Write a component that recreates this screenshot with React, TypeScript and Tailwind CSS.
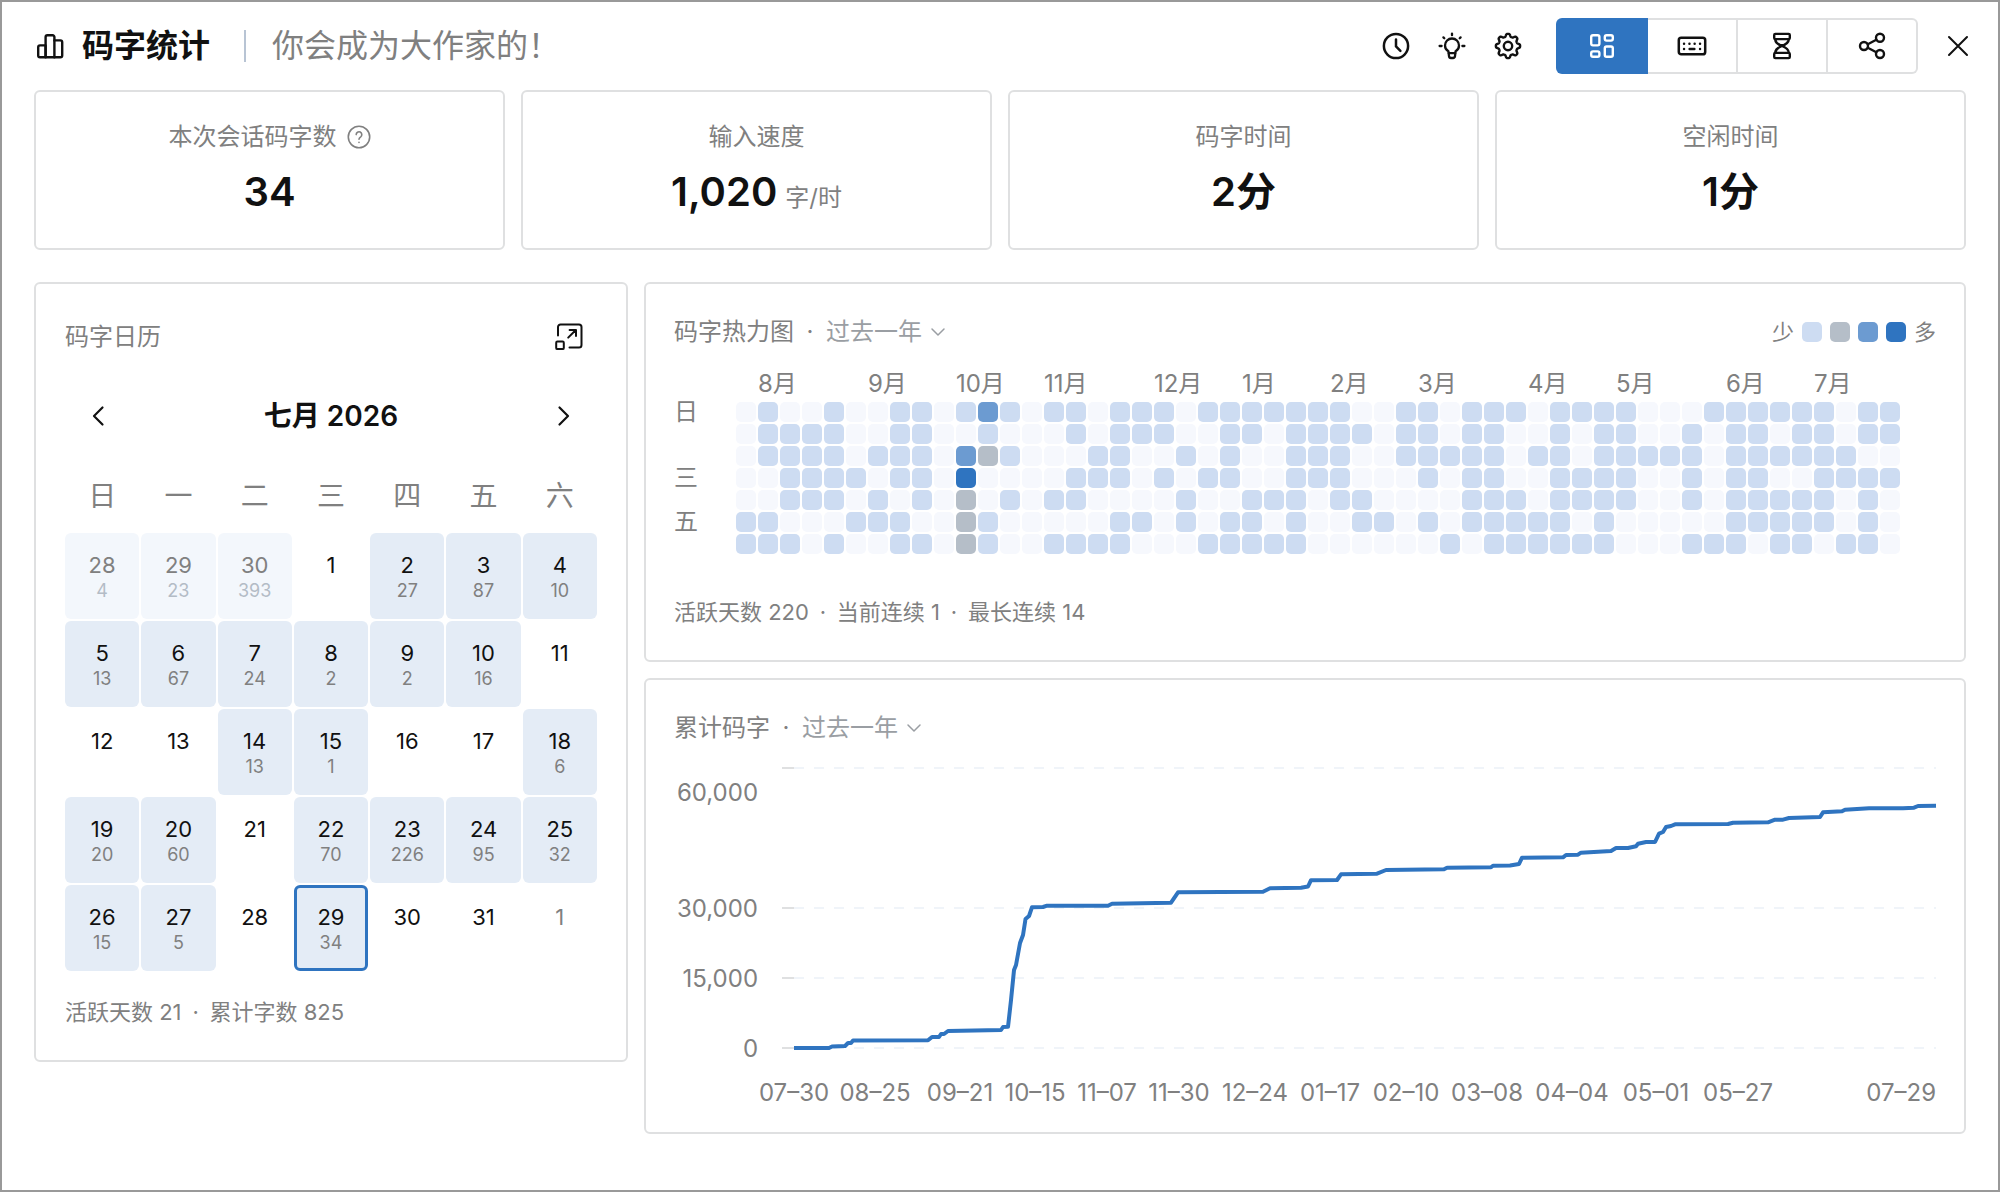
import React from 'react';

type IconProps = { className?: string };

const strokeProps = {
  viewBox: '0 0 28 28',
  fill: 'none',
  stroke: 'currentColor',
  strokeLinecap: 'round' as const,
  strokeLinejoin: 'round' as const,
  'aria-hidden': true,
};

const BarsIcon = ({ className }: IconProps) => (
  <svg {...strokeProps} strokeWidth={2.4} className={className}>
    <path d="M9.6 25.2V13.4H4a1.8 1.8 0 0 0-1.8 1.8v8.2A1.8 1.8 0 0 0 4 25.2h20.4a1.8 1.8 0 0 0 1.8-1.8V10.2a1.8 1.8 0 0 0-1.8-1.8h-6" />
    <path d="M9.6 25.2V5a1.8 1.8 0 0 1 1.8-1.8h5.2A1.8 1.8 0 0 1 18.4 5v20.2" />
  </svg>
);

const ClockIcon = ({ className }: IconProps) => (
  <svg {...strokeProps} strokeWidth={2.5} className={className}>
    <circle cx="14" cy="14" r="12.1" />
    <path d="M14 7.6v6.8l4.4 4.4" />
  </svg>
);

const BulbIcon = ({ className }: IconProps) => (
  <svg {...strokeProps} strokeWidth={2.3} className={className}>
    <path d="M10.4 19.2C8.2 18 7 15.8 7 13.5a7 7 0 0 1 14 0c0 2.3-1.2 4.5-3.4 5.7L17 24.2a2 2 0 0 1-2 1.8h-2a2 2 0 0 1-2-1.8Z" />
    <path d="M10.8 21.2h6.4M14 1.6v1.6M1.6 14h2M24.4 14h2M5.4 5.4l.9.9M22.6 5.4l-.9.9" />
  </svg>
);

// Eight soft teeth round the hub
const gearPoints = Array.from({ length: 144 }, (_, i) => {
  const angle = (i / 144) * Math.PI * 2;
  const r = 10.8 + 1.4 * Math.tanh(1.8 * Math.cos(8 * angle));
  return `${(14 + r * Math.cos(angle)).toFixed(2)},${(14 + r * Math.sin(angle)).toFixed(2)}`;
}).join(' ');

const GearIcon = ({ className }: IconProps) => (
  <svg {...strokeProps} strokeWidth={2.4} className={className}>
    <polygon points={gearPoints} />
    <circle cx="14" cy="14" r="4.2" />
  </svg>
);

const DashboardIcon = ({ className }: IconProps) => (
  <svg {...strokeProps} strokeWidth={2.4} className={className}>
    <rect x="3.2" y="3.2" width="8.2" height="10.2" rx="1.8" />
    <rect x="16.8" y="3.2" width="8" height="5.4" rx="1.8" />
    <rect x="3.2" y="19.4" width="8.2" height="5.4" rx="1.8" />
    <rect x="16.8" y="14.5" width="8" height="10.3" rx="1.8" />
  </svg>
);

const KeyboardIcon = ({ className }: IconProps) => (
  <svg {...strokeProps} viewBox="0 0 30 30" strokeWidth={2.5} className={className}>
    <rect x="1.8" y="6.7" width="26.4" height="16.6" rx="2.4" />
    <path
      d="M7 12.7h.1M12.4 12.7h.1M17.6 12.7h.1M23 12.7h.1M7 18h.1M12.6 18h4.8M23 18h.1"
      strokeWidth={2.4}
    />
  </svg>
);

const HourglassIcon = ({ className }: IconProps) => (
  <svg {...strokeProps} strokeWidth={2.4} className={className}>
    <rect x="6.2" y="1.9" width="15.6" height="5.2" rx="1.2" />
    <rect x="6.2" y="20.9" width="15.6" height="5.2" rx="1.2" />
    <path d="M7.2 7.4C7.4 10.5 9.3 12.2 14 14c-4.7 1.800-6.6 3.500-6.800 6.600M20.800 7.400C20.600 10.500 18.700 12.200 14 14c4.700 1.800 6.600 3.500 6.800 6.600" />
    <path d="M12 13.300h4" />
  </svg>
);

const ShareIcon = ({ className }: IconProps) => (
  <svg {...strokeProps} strokeWidth={2.4} className={className}>
    <circle cx="6" cy="14" r="4" />
    <circle cx="22" cy="5.8" r="4" />
    <circle cx="22" cy="22" r="4" />
    <path d="m9.8 12.2 8.5-4.400M9.800 15.800l8.500 4.400" />
  </svg>
);

const CloseIcon = ({ className }: IconProps) => (
  <svg {...strokeProps} strokeWidth={2} className={className}>
    <path d="m5 5 18 18M23 5 5 23" />
  </svg>
);

const HelpIcon = ({ className }: IconProps) => (
  <svg {...strokeProps} viewBox="0 0 24 24" strokeWidth={1.6} className={className}>
    <circle cx="12" cy="12" r="10.7" />
    <path d="M9.2 9.6a2.8 2.8 0 1 1 4.500 2.200c-1 .7-1.700 1.200-1.700 2.500M12 17.200v.2" />
  </svg>
);

const ExpandIcon = ({ className }: IconProps) => (
  <svg {...strokeProps} strokeWidth={2} className={className}>
    <path d="M3 12.5V4a2.5 2.5 0 0 1 2.5-2.5H24A2.5 2.5 0 0 1 26.5 4v18a2.5 2.5 0 0 1-2.5 2.5h-9.5" />
    <rect x="1.2" y="18.5" width="7.6" height="7.6" rx="1.2" />
    <path d="m13.2 14.6 7.6-7.6M14.6 6.9H21v6.2" />
  </svg>
);

const ChevronLeftIcon = ({ className }: IconProps) => (
  <svg {...strokeProps} strokeWidth={2.2} className={className}>
    <path d="m18.500 5.500-8.500 8.500 8.500 8.500" />
  </svg>
);

const ChevronRightIcon = ({ className }: IconProps) => (
  <svg {...strokeProps} strokeWidth={2.2} className={className}>
    <path d="m9.500 5.500 8.500 8.500-8.500 8.500" />
  </svg>
);

const ChevronDownIcon = ({ className }: IconProps) => (
  <svg {...strokeProps} viewBox="0 0 16 16" strokeWidth={1.5} className={className}>
    <path d="m2 5 6 6 6-6" />
  </svg>
);

interface Stat {
  label: string;
  value: string;
  unit?: string;
  help?: boolean;
}

const stats: Stat[] = [
  { label: '本次会话码字数', value: '34', help: true },
  { label: '输入速度', value: '1,020', unit: '字/时' },
  { label: '码字时间', value: '2分' },
  { label: '空闲时间', value: '1分' },
];

interface Day {
  day: number;
  words?: number;
  outside?: boolean;
  today?: boolean;
}

const weekdays = ['日', '一', '二', '三', '四', '五', '六'];

const days: Day[] = [
  { day: 28, words: 4, outside: true },
  { day: 29, words: 23, outside: true },
  { day: 30, words: 393, outside: true },
  { day: 1 },
  { day: 2, words: 27 },
  { day: 3, words: 87 },
  { day: 4, words: 10 },
  { day: 5, words: 13 },
  { day: 6, words: 67 },
  { day: 7, words: 24 },
  { day: 8, words: 2 },
  { day: 9, words: 2 },
  { day: 10, words: 16 },
  { day: 11 },
  { day: 12 },
  { day: 13 },
  { day: 14, words: 13 },
  { day: 15, words: 1 },
  { day: 16 },
  { day: 17 },
  { day: 18, words: 6 },
  { day: 19, words: 20 },
  { day: 20, words: 60 },
  { day: 21 },
  { day: 22, words: 70 },
  { day: 23, words: 226 },
  { day: 24, words: 95 },
  { day: 25, words: 32 },
  { day: 26, words: 15 },
  { day: 27, words: 5 },
  { day: 28 },
  { day: 29, words: 34, today: true },
  { day: 30 },
  { day: 31 },
  { day: 1, outside: true },
];

// One string per weekday, one digit per week: 0 = none, 4 = most
const heatRows = [
  '01001001101310110111011111110011011101111000111111011',
  '01111001100100010111001101111011011001011001011011011',
  '01111011103210001100101001110011111011011111011111100',
  '00111101104000011101011001110001011001111001011001111',
  '00111010102010110000100111011000011101111001011111010',
  '11000111002100000110101101001101011111010000011111010',
  '11101001102100111100011111000000101111110001110110110',
];

const heatColors = ['bg-[#f6f8fd]', 'bg-[#cddcf2]', 'bg-[#b5bec8]', 'bg-[#6c9bd1]', 'bg-[#2f74c0]'];

// Every month label spans the weeks up to the next one
const heatMonths = [
  { label: '', span: 'col-span-1' },
  { label: '8月', span: 'col-span-5' },
  { label: '9月', span: 'col-span-4' },
  { label: '10月', span: 'col-span-4' },
  { label: '11月', span: 'col-span-5' },
  { label: '12月', span: 'col-span-4' },
  { label: '1月', span: 'col-span-4' },
  { label: '2月', span: 'col-span-4' },
  { label: '3月', span: 'col-span-5' },
  { label: '4月', span: 'col-span-4' },
  { label: '5月', span: 'col-span-5' },
  { label: '6月', span: 'col-span-4' },
  { label: '7月', span: 'col-span-4' },
];

const heatWeekdays = ['日', '', '', '三', '', '五', ''];

const yTicks = [
  { label: '60,000', line: 16, text: 40 },
  { label: '30,000', line: 156, text: 156 },
  { label: '15,000', line: 226, text: 226 },
  { label: '0', line: 296, text: 296 },
];

const xTicks = [
  { label: '07–30', x: 120 },
  { label: '08–25', x: 201 },
  { label: '09–21', x: 286 },
  { label: '10–15', x: 361 },
  { label: '11–07', x: 433 },
  { label: '11–30', x: 505 },
  { label: '12–24', x: 581 },
  { label: '01–17', x: 656 },
  { label: '02–10', x: 732 },
  { label: '03–08', x: 813 },
  { label: '04–04', x: 898 },
  { label: '05–01', x: 982 },
  { label: '05–27', x: 1064 },
];

const totalLine =
  '120,296 155,296 158,294.5 171,294 174,291 177,291 179,288.5 254,288.3 258,285 265,285 267,282 270,282 274,279 327,278 329,275 334,274.7 337,248 340,218 342,213 346,191 349,183 351.5,167 355,164 358,155.2 369,155 373,153.7 434,153.7 438,151.7 497,150.7 504,140.3 589,139.7 596,136.3 627,135.7 634,134.5 637,128.2 663,128 667,122.3 703,121.7 712,118 770,117.3 773,115.7 817,115.3 819,113.7 836,113.5 845,112 848,105.7 889,105.3 892,103 904,102.7 907,100.7 937,99 942,96 954,96 962,94.3 964,91.7 972,90 981,90 985,81.7 989,80 992,75 997,74 1001,72.3 1054,72 1059,70.7 1094,70.3 1101,67.7 1109,67.7 1115,66 1146,65 1149,60.3 1168,59.3 1171,57.7 1195,56.3 1229,56.3 1240,55.7 1244,54 1262,53.7';

const RangeTitle = ({ title }: { title: string }) => (
  <div className="flex h-8 items-center text-2xl leading-8">
    <h2>{title}</h2>
    <span className="w-8 text-center">·</span>
    <select aria-label={title} className="cursor-pointer appearance-none bg-transparent text-[#9a9ea3]">
      <option>过去一年</option>
    </select>
    <ChevronDownIcon className="pointer-events-none ml-2 size-4 text-[#9a9ea3]" />
  </div>
);

const Header = () => {
  const tools = [
    { label: '历史', Icon: ClockIcon },
    { label: '提示', Icon: BulbIcon },
    { label: '设置', Icon: GearIcon },
  ];
  const views = [
    { label: '键盘', Icon: KeyboardIcon, edge: '', size: 'size-[30px]' },
    { label: '计时', Icon: HourglassIcon, edge: '', size: 'size-7' },
    { label: '分享', Icon: ShareIcon, edge: 'rounded-r-md', size: 'size-7' },
  ];

  return (
    <header className="flex h-[88px] items-center pr-5 pl-[34px]">
      <BarsIcon className="size-7" />
      <h1 className="ml-[18px] text-[32px] leading-10 font-bold">码字统计</h1>
      <span className="ml-[34px] h-8 w-0.5 bg-[#b8c4d4]" />
      <p className="ml-[26px] text-[32px] leading-10 text-[#808080]">你会成为大作家的！</p>

      <div className="ml-auto flex gap-7">
        {tools.map(({ label, Icon }) => (
          <button key={label} type="button" aria-label={label}>
            <Icon className="size-7" />
          </button>
        ))}
      </div>

      <div className="ml-[34px] flex h-14">
        <button
          type="button"
          aria-label="总览"
          className="flex w-[92px] items-center justify-center rounded-l-md bg-[#2f74c0] text-white"
        >
          <DashboardIcon className="size-7" />
        </button>
        {views.map(({ label, Icon, edge, size }) => (
          <button
            key={label}
            type="button"
            aria-label={label}
            className={`flex w-[90px] items-center justify-center border-y-2 border-r-2 border-[#dfe0e1] ${edge}`}
          >
            <Icon className={size} />
          </button>
        ))}
      </div>

      <button type="button" aria-label="关闭" className="ml-5 flex size-10 items-center justify-center">
        <CloseIcon className="size-7" />
      </button>
    </header>
  );
};

const StatCard = ({ stat }: { stat: Stat }) => (
  <div className="flex flex-col items-center gap-[15px] rounded-md border-2 border-[#dfe0e1] pt-[29px] pb-8">
    <div className="flex items-center gap-2.5 text-2xl leading-8 text-[#808080]">
      {stat.label}
      {stat.help && <HelpIcon className="size-6" />}
    </div>
    <div className="flex items-baseline gap-2 text-[40px] leading-12 font-semibold">
      {stat.value}
      {stat.unit && <span className="text-2xl leading-8 font-normal text-[#808080]">{stat.unit}</span>}
    </div>
  </div>
);

const dayStyle = (item: Day) => {
  if (item.today) return 'bg-[#e4ecf6] border-[3px] border-[#2f74c0] pt-[15px]';
  if (item.words === undefined) return 'pt-[18px]';
  return item.outside ? 'bg-[#f3f7fc] pt-[18px]' : 'bg-[#e4ecf6] pt-[18px]';
};

const CalendarPanel = () => (
  <section className="self-start rounded-md border-2 border-[#dfe0e1] px-[29px] pt-[37px] pb-8 text-[#808080]">
    <div className="flex h-8 items-center justify-between pr-[14px]">
      <h2 className="text-2xl leading-8">码字日历</h2>
      <button type="button" aria-label="展开" className="text-[#111111]">
        <ExpandIcon className="size-7" />
      </button>
    </div>

    <div className="mt-[43px] flex h-10 items-center justify-between px-[19px] text-[#111111]">
      <button type="button" aria-label="上个月">
        <ChevronLeftIcon className="size-7" />
      </button>
      <h3 className="text-[28px] leading-10 font-semibold">七月 2026</h3>
      <button type="button" aria-label="下个月">
        <ChevronRightIcon className="size-7" />
      </button>
    </div>

    <div className="mt-10 grid grid-cols-7 gap-0.5 text-center text-[28px] leading-10">
      {weekdays.map((name) => (
        <span key={name}>{name}</span>
      ))}
    </div>

    <div className="mt-[17px] grid grid-cols-7 gap-0.5">
      {days.map((item, index) => (
        <button
          key={index}
          type="button"
          className={`flex h-[86px] flex-col items-center rounded-md ${dayStyle(item)}`}
        >
          <span className={`text-[22px] leading-7 ${item.outside ? 'text-[#808080]' : 'text-[#111111]'}`}>
            {item.day}
          </span>
          {item.words !== undefined && (
            <span className={`text-lg leading-6 ${item.outside ? 'text-[#b3bcc6]' : 'text-[#808080]'}`}>
              {item.words}
            </span>
          )}
        </button>
      ))}
    </div>

    <p className="mt-[25px] flex h-8 items-center text-[22px] leading-8">
      活跃天数 21<span className="w-7 text-center">·</span>累计字数 825
    </p>
  </section>
);

const HeatmapPanel = () => (
  <section className="rounded-md border-2 border-[#dfe0e1] px-7 pt-8 pb-8 text-[#808080]">
    <div className="flex items-center justify-between">
      <RangeTitle title="码字热力图" />
      <div className="flex items-center gap-2 text-[22px] leading-8">
        少
        {heatColors.slice(1).map((color) => (
          <span key={color} className={`size-5 rounded-[5px] ${color}`} />
        ))}
        多
      </div>
    </div>

    <div className="mt-5 flex text-2xl">
      <div className="mt-[34px] flex w-[62px] flex-col gap-0.5">
        {heatWeekdays.map((name, index) => (
          <span key={index} className="h-5 leading-5">
            {name}
          </span>
        ))}
      </div>
      <div>
        <div className="grid h-8 grid-cols-[repeat(53,20px)] gap-x-0.5 leading-8 whitespace-nowrap">
          {heatMonths.map((month, index) => (
            <span key={index} className={month.span}>
              {month.label}
            </span>
          ))}
        </div>
        <div className="mt-0.5 grid grid-cols-[repeat(53,20px)] gap-0.5">
          {heatRows.flatMap((row, r) =>
            row.split('').map((level, c) => (
              <span key={`${r}-${c}`} className={`h-5 rounded-[5px] ${heatColors[Number(level)]}`} />
            )),
          )}
        </div>
      </div>
    </div>

    <p className="mt-[42px] flex h-8 items-center text-[22px] leading-8">
      活跃天数 220<span className="w-7 text-center">·</span>当前连续 1
      <span className="w-7 text-center">·</span>最长连续 14
    </p>
  </section>
);

const TotalPanel = () => (
  <section className="rounded-md border-2 border-[#dfe0e1] px-7 pt-8 pb-4 text-[#808080]">
    <RangeTitle title="累计码字" />
    <svg viewBox="0 0 1262 364" className="mt-2 block w-full overflow-visible" role="img" aria-label="累计码字">
      {yTicks.map((tick) => (
        <g key={tick.label}>
          <line x1="108" x2="120" y1={tick.line} y2={tick.line} stroke="#dfe0e1" strokeWidth="2" />
          <line
            x1="120"
            x2="1262"
            y1={tick.line}
            y2={tick.line}
            stroke="#f0f4f9"
            strokeWidth="2"
            strokeDasharray="10 10"
          />
          <text x="84" y={tick.text + 9} textAnchor="end" fontSize="24" fill="currentColor">
            {tick.label}
          </text>
        </g>
      ))}
      {xTicks.map((tick) => (
        <text key={tick.label} x={tick.x} y="349" textAnchor="middle" fontSize="24" fill="currentColor">
          {tick.label}
        </text>
      ))}
      <text x="1262" y="349" textAnchor="end" fontSize="24" fill="currentColor">
        07–29
      </text>
      <polyline points={totalLine} fill="none" stroke="#2f74c0" strokeWidth="4" strokeLinejoin="round" />
    </svg>
  </section>
);

const App = () => {
  return (
    <div className="min-h-screen border-2 border-[#999999] bg-white font-['Inter','Noto_Sans_CJK_SC',sans-serif] text-[#111111]">
      <Header />
      <main className="px-8">
        <div className="grid grid-cols-4 gap-4">
          {stats.map((stat) => (
            <StatCard key={stat.label} stat={stat} />
          ))}
        </div>
        <div className="mt-8 grid grid-cols-[31fr_69fr] gap-4">
          <CalendarPanel />
          <div className="flex min-w-0 flex-col gap-4">
            <HeatmapPanel />
            <TotalPanel />
          </div>
        </div>
      </main>
    </div>
  );
};

export default App;
